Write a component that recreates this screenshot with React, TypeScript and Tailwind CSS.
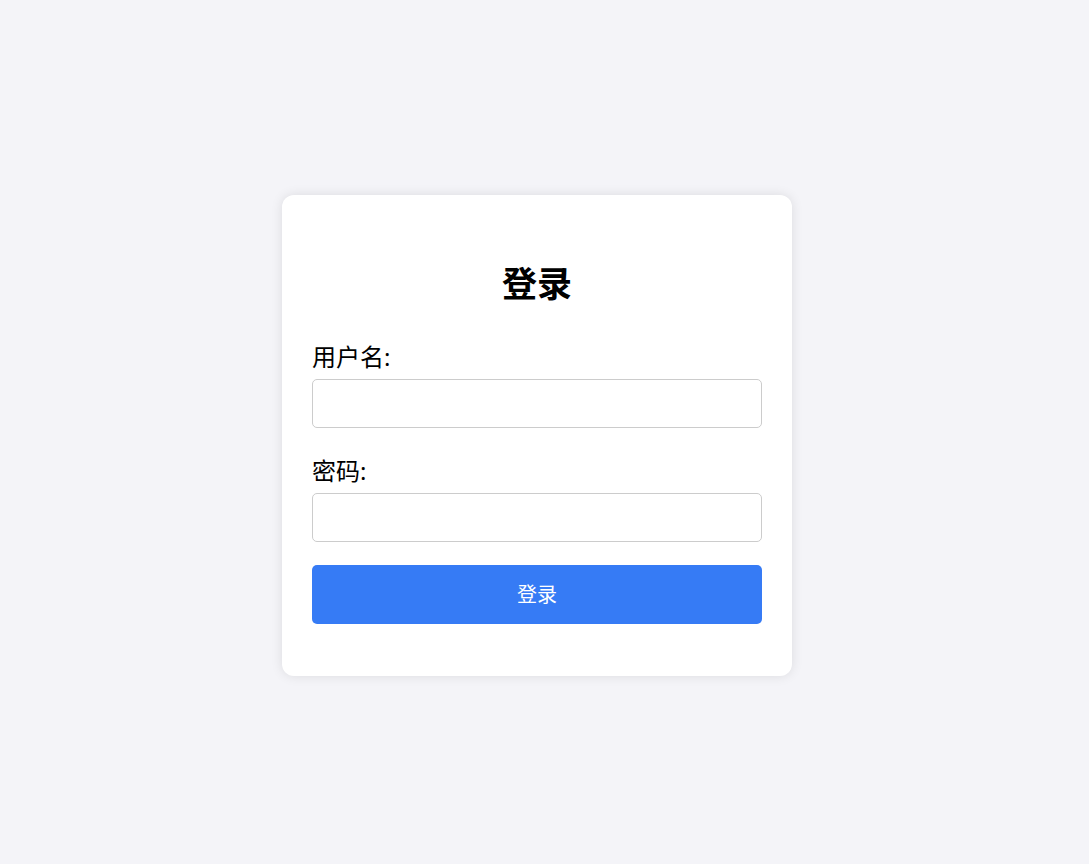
export default function App() {
  return (
    <div
      className="flex h-[864px] w-full items-center justify-center bg-[#f4f4f8] pr-[15px] pt-[7px]"
      style={{ fontFamily: '"Noto Sans", "Noto Sans CJK SC", sans-serif' }}
    >
      <div className="w-[510px] rounded-xl bg-white px-[30px] pb-[52px] pt-[64px] shadow-[0_0_12px_rgba(0,0,0,0.1)]">
        <h1 className="mb-[32px] text-center text-[35px] font-bold leading-[49px] text-black">登录</h1>

        <div className="mb-[26px]">
          <label className="mb-[6px] block text-[24px] leading-[33px] text-black">用户名:</label>
          <input
            type="text"
            className="block h-[49px] w-full rounded-[5px] border border-[#cccccc] bg-white px-3 text-base outline-none"
          />
        </div>

        <div className="mb-[23px]">
          <label className="mb-[6px] block text-[24px] leading-[33px] text-black">密码:</label>
          <input
            type="password"
            className="block h-[49px] w-full rounded-[5px] border border-[#cccccc] bg-white px-3 text-base outline-none"
          />
        </div>

        <button className="block h-[59px] w-full rounded-[5px] bg-[#367bf5] text-[20px] text-white">
          登录
        </button>
      </div>
    </div>
  );
}
